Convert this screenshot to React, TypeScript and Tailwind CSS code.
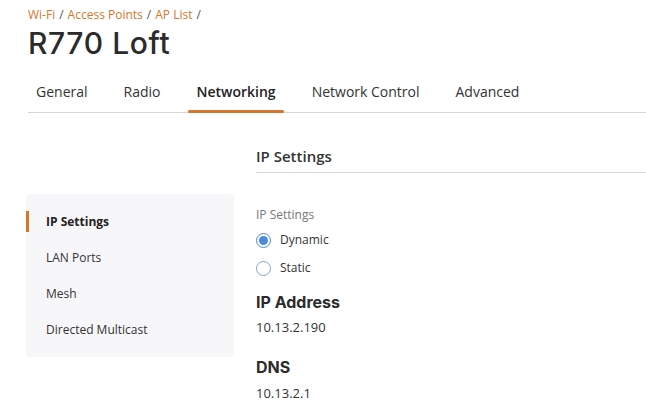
import { useState } from "react";

const tabs = ["General", "Radio", "Networking", "Network Control", "Advanced"];
const sideItems = ["IP Settings", "LAN Ports", "Mesh", "Directed Multicast"];

export default function App() {
  const [tab, setTab] = useState("Networking");
  const [side, setSide] = useState("IP Settings");
  const [mode, setMode] = useState("Dynamic");

  return (
    <div className="h-[413px] w-[646px] overflow-hidden bg-white font-['Open_Sans',sans-serif] text-[#333]">
      {/* Header */}
      <div className="pl-[28px] pt-[6px]">
        <div className="flex items-center gap-[4px] text-[12px] leading-[18px]">
          <span className="text-[#d5772a]">Wi-Fi</span>
          <span className="text-[#555]">/</span>
          <span className="text-[#d5772a]">Access Points</span>
          <span className="text-[#555]">/</span>
          <span className="text-[#d5772a]">AP List</span>
          <span className="text-[#555]">/</span>
        </div>
        <h1 className="mt-[1px] font-['Inter',sans-serif] text-[30px] leading-[36px] font-medium tracking-[0.6px] text-[#2b2b2b]">
          R770 Loft
        </h1>
      </div>

      {/* Tabs */}
      <div className="ml-[28px] mt-[21px] flex gap-[20px] border-b border-[#d6d6d6]">
        {tabs.map((t) => (
          <button
            key={t}
            onClick={() => setTab(t)}
            className={`relative px-[8px] pb-[10px] text-[14px] leading-[20px] ${
              tab === t ? "font-semibold text-[#222]" : "text-[#333]"
            }`}
          >
            {t}
            {tab === t && (
              <span className="absolute -bottom-[1px] left-0 right-0 h-[3px] rounded-[2px] bg-[#d5772a]" />
            )}
          </button>
        ))}
      </div>

      <div className="flex">
        {/* Side menu */}
        <div className="ml-[26px] mt-[81px] h-[163px] w-[208px] rounded-[3px] bg-[#f7f7f9] pt-[10px]">
          {sideItems.map((s) => (
            <div
              key={s}
              onClick={() => setSide(s)}
              className="relative flex h-[36px] cursor-pointer items-center pl-[20px] text-[12px]"
            >
              {side === s && <span className="absolute left-0 top-[7px] h-[21px] w-[3px] bg-[#d5772a]" />}
              <span className={side === s ? "font-bold text-[#222]" : "text-[#333]"}>{s}</span>
            </div>
          ))}
        </div>

        {/* Content */}
        <div className="ml-[22px] flex-1 pt-[32px]">
          <div className="border-b border-[#d6d6d6] pb-[5px] text-[15px] leading-[22px] font-semibold text-[#333]">
            IP Settings
          </div>
          <div className="mt-[34px] text-[12px] leading-[16px] text-[#777]">IP Settings</div>
          <div className="mt-[8px] flex flex-col gap-[10px]">
            {["Dynamic", "Static"].map((m) => (
              <label key={m} className="flex cursor-pointer items-center gap-[9px] text-[12px] leading-[18px]" onClick={() => setMode(m)}>
                <span
                  className={`flex h-[15px] w-[15px] items-center justify-center rounded-full border ${
                    mode === m ? "border-[#4a8be0] bg-white" : "border-[#8aa3c4] bg-white"
                  }`}
                >
                  {mode === m && <span className="h-[9px] w-[9px] rounded-full bg-[#4a8be0]" />}
                </span>
                <span className="text-[#333]">{m}</span>
              </label>
            ))}
          </div>
          <div className="mt-[14px] font-['Inter',sans-serif] text-[16px] leading-[22px] font-bold text-[#2b2b2b]">IP Address</div>
          <div className="mt-[5px] text-[13px] leading-[18px] text-[#333]">10.13.2.190</div>
          <div className="mt-[20px] font-['Inter',sans-serif] text-[16px] leading-[22px] font-bold text-[#2b2b2b]">DNS</div>
          <div className="mt-[6px] text-[13px] leading-[18px] text-[#333]">10.13.2.1</div>
        </div>
      </div>
    </div>
  );
}
